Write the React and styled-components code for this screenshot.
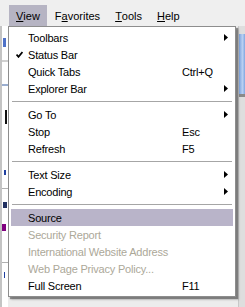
import React from "react";
import styled, { createGlobalStyle } from "styled-components";

const Global = createGlobalStyle`
  html, body { margin: 0; padding: 0; }
  body { background: #ececec; font-family: "Liberation Sans", Arial, sans-serif; }
`;

const Window = styled.div`
  position: relative;
  width: 245px;
  height: 307px;
  overflow: hidden;
  background: #ececec;
  font-family: "Liberation Sans", Arial, sans-serif;
  font-size: 11px;
  color: #000;
`;

const MenuBar = styled.div`
  display: flex;
  align-items: stretch;
  gap: 1px;
  height: 21px;
  padding: 5px 0 0 9px;
  background: #efefef;
`;

const BarItem = styled.div`
  display: flex;
  align-items: center;
  padding: 0 7px;
  background: ${(p) => (p.$active ? "#b6b4c3" : "transparent")};
`;

const U = styled.span`
  text-decoration: underline;
  text-underline-offset: 1px;
`;

const Body = styled.div`
  display: flex;
  height: 281px;
`;

const LeftStrip = styled.div`
  position: relative;
  width: 6px;
  border-left: 2px solid #c4c4c4;
  background: #fff;
  overflow: hidden;
`;

const Bit = styled.div`
  position: absolute;
  left: ${(p) => p.$x || 0}px;
  width: ${(p) => (p.$w ? `${p.$w}px` : "100%")};
  top: ${(p) => p.$y}px;
  height: ${(p) => p.$h || 1}px;
  background: ${(p) => p.$c || "#b8b8b8"};
`;

const Canvas = styled.div`
  flex: 1;
  background: #ececec;
`;

const ScrollBar = styled.div`
  position: relative;
  width: 6px;
  background: #dedede;
  border-left: 1px solid #c8c8c8;
`;

const Thumb = styled.div`
  position: absolute;
  left: 0;
  right: 0;
  top: 8px;
  height: 60px;
  background: linear-gradient(90deg, #7fa6e0, #b9d0f2 60%, #7fa6e0);
  border-bottom: 3px solid #8a8a8a;
`;

const Dropdown = styled.div`
  position: absolute;
  left: 8px;
  top: 26px;
  width: 222px;
  padding: 2px;
  background: #fff;
  border: 1px solid #8d8d8d;
  letter-spacing: -0.2px;
  box-shadow: 2px 2px 1px rgba(0, 0, 0, 0.38), 3px 3px 2px rgba(0, 0, 0, 0.15);
`;

const Item = styled.div`
  display: flex;
  align-items: center;
  height: 17px;
  background: ${(p) => (p.$hl ? "#b9b4c9" : "transparent")};
  color: ${(p) => (p.$disabled ? "#aca899" : "#000")};
`;

const CheckCell = styled.div`
  width: 17px;
  height: 17px;
  display: flex;
  align-items: center;
  justify-content: flex-start;
  padding-left: 5px;
  box-sizing: border-box;
`;

const Label = styled.div`
  flex: 1;
  white-space: nowrap;
`;

const Shortcut = styled.div`
  width: 40px;
  white-space: nowrap;
`;

const ArrowCell = styled.div`
  width: 11px;
  height: 17px;
  display: flex;
  align-items: center;
  padding-left: 2px;
  box-sizing: border-box;
`;

const Separator = styled.div`
  height: 9px;
  display: flex;
  align-items: center;
  padding: 0 1px;
  &::after {
    content: "";
    flex: 1;
    height: 1px;
    background: #a6a6a6;
  }
`;

const Check = () => (
  <svg width="7" height="7" viewBox="0 0 7 7">
    <polyline points="0.5,3.5 2.5,5.8 6.5,1" fill="none" stroke="#000" strokeWidth="1.8" />
  </svg>
);

const Arrow = () => (
  <svg width="4" height="7" viewBox="0 0 4 7">
    <polygon points="0,0 4,3.5 0,7" fill="#000" />
  </svg>
);

const menu = [
  { label: "Toolbars", sub: true },
  { label: "Status Bar", checked: true },
  { label: "Quick Tabs", key: "Ctrl+Q" },
  { label: "Explorer Bar", sub: true },
  { sep: true },
  { label: "Go To", sub: true },
  { label: "Stop", key: "Esc" },
  { label: "Refresh", key: "F5" },
  { sep: true },
  { label: "Text Size", sub: true },
  { label: "Encoding", sub: true },
  { sep: true },
  { label: "Source", hl: true },
  { label: "Security Report", disabled: true },
  { label: "International Website Address", disabled: true },
  { label: "Web Page Privacy Policy...", disabled: true },
  { label: "Full Screen", key: "F11" },
];

export default function App() {
  return (
    <>
      <Global />
      <Window>
        <MenuBar>
          <BarItem $active><U>V</U>iew</BarItem>
          <BarItem>F<U>a</U>vorites</BarItem>
          <BarItem><U>T</U>ools</BarItem>
          <BarItem><U>H</U>elp</BarItem>
        </MenuBar>
        <Body>
          <LeftStrip>
            <Bit $x={1} $w={3} $y={12} $h={9} $c="#4f72c8" />
            <Bit $y={34} $h={2} $c="#d0d0d0" />
            <Bit $y={58} $h={2} $c="#9aaed0" />
            <Bit $x={3} $w={2} $y={84} $h={14} $c="#101010" />
            <Bit $x={2} $w={2} $y={144} $h={5} $c="#2040a0" />
            <Bit $y={162} $c="#b0b0b0" />
            <Bit $x={1} $w={4} $y={176} $h={6} $c="#203060" />
            <Bit $x={0} $w={4} $y={198} $h={7} $c="#800080" />
            <Bit $y={236} $c="#b0b0b0" />
            <Bit $x={2} $w={1} $y={246} $h={6} $c="#2040a0" />
          </LeftStrip>
          <Canvas />
          <ScrollBar>
            <Thumb />
          </ScrollBar>
        </Body>
        <Dropdown>
          {menu.map((m, i) =>
            m.sep ? (
              <Separator key={i} />
            ) : (
              <Item key={i} $hl={m.hl} $disabled={m.disabled}>
                <CheckCell>{m.checked && <Check />}</CheckCell>
                <Label>{m.label}</Label>
                <Shortcut>{m.key || ""}</Shortcut>
                <ArrowCell>{m.sub && <Arrow />}</ArrowCell>
              </Item>
            )
          )}
        </Dropdown>
      </Window>
    </>
  );
}
